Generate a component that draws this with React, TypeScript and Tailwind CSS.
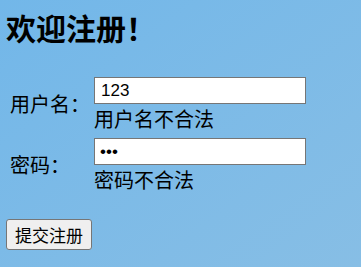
import React from "react";

export default function App() {
  const cjk = { fontFamily: '"Noto Sans CJK SC", "Liberation Sans", sans-serif' };
  return (
    <div
      className="w-full h-screen bg-gradient-to-br from-[#72b7e9] to-[#87bee5] text-black overflow-hidden"
      style={cjk}
    >
      <h1 className="pt-[9px] pl-[6px] text-[30px] leading-[36px] font-bold m-0">欢迎注册！</h1>
      <form className="mt-[32px] pl-[10px] grid grid-cols-[84px_212px] gap-y-[7px] items-center">
        <label className="text-[20px] leading-[24px]">用户名：</label>
        <div className="flex flex-col">
          <input
            type="text"
            defaultValue="123"
            className="h-[27px] w-[212px] bg-white border border-[#767676] px-[6px] text-[17px] outline-none"
            style={{ fontFamily: '"Liberation Sans", Arial, sans-serif' }}
          />
          <span className="mt-[3px] text-[20px] leading-[24px]">用户名不合法</span>
        </div>
        <label className="text-[20px] leading-[24px]">密码：</label>
        <div className="flex flex-col">
          <input
            type="password"
            defaultValue="123"
            className="h-[27px] w-[212px] bg-white border border-[#767676] px-[5px] text-[17px] outline-none"
            style={{ fontFamily: '"Liberation Sans", Arial, sans-serif' }}
          />
          <span className="mt-[3px] text-[20px] leading-[24px]">密码不合法</span>
        </div>
      </form>
      <div className="pl-[6px] mt-[27px]">
        <button
          type="button"
          className="h-[31px] w-[86px] bg-[#efefef] border border-[#767676] rounded-[3px] text-[17px] leading-none"
        >
          提交注册
        </button>
      </div>
    </div>
  );
}
